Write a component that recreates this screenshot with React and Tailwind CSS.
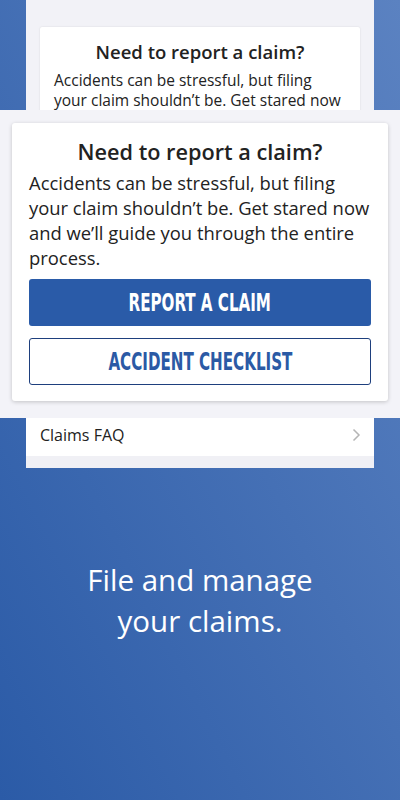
import React from 'react';

const sans = { fontFamily: '"Open Sans", "Noto Sans", sans-serif' };
const narrow = { fontFamily: '"DejaVu Sans Condensed", "Liberation Sans", sans-serif' };

function ClaimButton({ outline, children }) {
  return (
    <button
      className={
        outline
          ? 'h-[47px] rounded-[3px] border border-[#1e3f7d] bg-white text-[#2b5aa5] flex items-center justify-center'
          : 'h-[47px] rounded-[3px] bg-[#2a5ba8] text-white flex items-center justify-center'
      }
    >
      <span className="inline-block scale-x-[0.7] text-[24px] leading-none font-bold whitespace-nowrap" style={narrow}>
        {children}
      </span>
    </button>
  );
}

function ClaimCard({ small }) {
  if (small) {
    return (
      <div className="bg-white rounded-[2px] shadow-[0_0_2px_rgba(0,0,0,0.12)] px-[14px] pt-[12px] h-[100px] overflow-hidden" style={sans}>
        <h2 className="text-center text-[18.5px] leading-[26px] font-semibold text-[#222]">Need to report a claim?</h2>
        <p className="mt-[5px] text-[15.5px] leading-[20px] text-[#222]">
          Accidents can be stressful, but filing your claim shouldn’t be. Get stared now and we’ll guide you through the entire process.
        </p>
      </div>
    );
  }
  return (
    <div className="bg-white rounded-[3px] shadow-[0_1px_4px_rgba(0,0,0,0.2)] px-[17px] pt-[13px] pb-[16px]" style={sans}>
      <h2 className="text-center text-[21.7px] leading-[32px] font-semibold text-[#222]">Need to report a claim?</h2>
      <p className="mt-[2px] text-[18.4px] leading-[25px] text-[#222]">
        Accidents can be stressful, but filing your claim shouldn’t be. Get stared now and we’ll guide you through the entire process.
      </p>
      <div className="mt-[9px] flex flex-col gap-[12px]">
        <ClaimButton>REPORT A CLAIM</ClaimButton>
        <ClaimButton outline>ACCIDENT CHECKLIST</ClaimButton>
      </div>
    </div>
  );
}

export default function App() {
  return (
    <div className="w-[400px] h-[800px] overflow-hidden flex flex-col bg-gradient-to-tr from-[#2b5ba7] to-[#5b82c1]">
      <div className="mx-[26px] h-[110px] bg-[#f2f2f7] pt-[27px] px-[14px] overflow-hidden">
        <ClaimCard small />
      </div>
      <div className="h-[308px] bg-[#f3f3f8] px-[12px] pt-[13px]">
        <ClaimCard />
      </div>
      <div className="mx-[26px] h-[50px] bg-[#f0f0f5]">
        <div className="h-[38px] bg-white flex items-center justify-between pl-[14px] pr-[13px] pb-[5px]" style={sans}>
          <span className="text-[16px] text-[#222]">Claims FAQ</span>
          <svg width="9" height="14" viewBox="0 0 9 14" fill="none">
            <polyline points="1.5,1.5 7,7 1.5,12.5" stroke="#b5b5b5" strokeWidth="1.5" />
          </svg>
        </div>
      </div>
      <p className="mt-[91px] text-center text-white text-[29.5px] leading-[41px]" style={sans}>
        File and manage
        <br />
        your claims.
      </p>
    </div>
  );
}
